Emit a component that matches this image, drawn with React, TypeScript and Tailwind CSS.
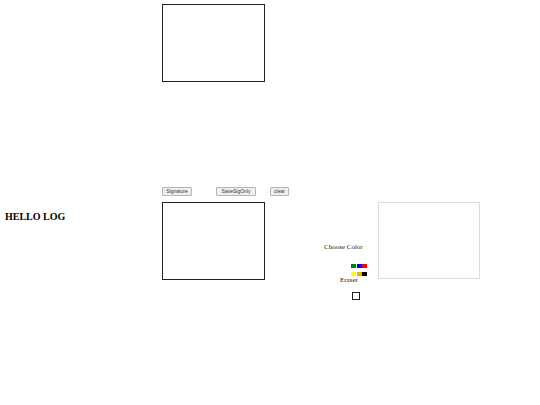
import React from 'react'

const swatchesTop = ['bg-[#008000]', 'bg-[#0000ff]', 'bg-[#ff0000]']
const swatchesBottom = ['bg-[#ffff00]', 'bg-[#ffa500]', 'bg-[#000000]']

function SmallButton({ label, className = '' }: { label: string; className?: string }) {
  return (
    <button
      className={`shrink-0 h-[9px] px-[1px] flex items-center justify-center rounded-[1px] border border-[#b5b5b5] bg-[#efefef] text-[5px] leading-none text-[#333] ${className}`}
      style={{ fontFamily: '"Liberation Sans", Arial, sans-serif' }}
    >
      {label}
    </button>
  )
}

export default function App() {
  return (
    <div
      className="w-[540px] h-[405px] bg-white text-black overflow-hidden"
      style={{ fontFamily: '"Liberation Serif", "Times New Roman", serif' }}
    >
      {/* top canvas */}
      <div className="pl-[162px] pt-[4px]">
        <div className="w-[103px] h-[78px] border border-[#222] bg-white" />
      </div>

      <div className="mt-[104px] flex items-start">
        {/* title */}
        <div className="w-[162px] shrink-0 pl-[5px] pt-[25px]">
          <h1 className="text-[10px] leading-[12px] font-bold">HELLO LOG</h1>
        </div>

        {/* signature pad */}
        <div className="w-[103px] shrink-0 flex flex-col">
          <div className="flex items-center h-[9px] mt-[1px]">
            <SmallButton label="Signature" className="w-[30px]" />
            <SmallButton label="SaveSigOnly" className="w-[40px] ml-[24px]" />
            <SmallButton label="clear" className="w-[19px] ml-[14px]" />
          </div>
          <div className="mt-[6px] w-[103px] h-[78px] border border-[#222] bg-white" />
        </div>

        {/* color tools */}
        <div className="w-[113px] shrink-0 flex flex-col text-[7px] leading-[8px] text-[#222]">
          <div className="pl-[59px] mt-[57px]">Choose Color</div>
          <div className="pl-[86px] mt-[13px] flex flex-col gap-[3.5px]">
            <div className="flex gap-[0.5px]">
              {swatchesTop.map((c) => (
                <span key={c} className={`w-[5px] h-[4px] ${c}`} />
              ))}
            </div>
            <div className="flex gap-[0.5px]">
              {swatchesBottom.map((c) => (
                <span key={c} className={`w-[5px] h-[4px] ${c}`} />
              ))}
            </div>
          </div>
          <div className="pl-[75px] mt-[0px]">Eraser</div>
          <div className="pl-[87px] mt-[8px]">
            <div className="w-[8px] h-[8px] border border-[#222] bg-white" />
          </div>
        </div>

        {/* preview */}
        <div className="mt-[16px] w-[102px] h-[77px] border border-[#dcdcdc] bg-white" />
      </div>
    </div>
  )
}
